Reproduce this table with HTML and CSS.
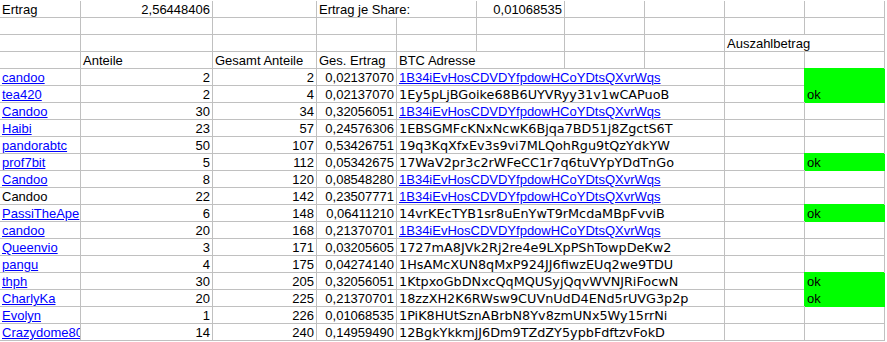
FILE: index.html
```html
<!DOCTYPE html>
<html lang="de">
<head>
<meta charset="utf-8">
<title>Ertrag</title>
<link rel="stylesheet" href="styles.css">
</head>
<body>
<div class="sheet">
  <!-- row 1 -->
  <div class="c">Ertrag</div>
  <div class="c r">2,56448406</div>
  <div class="c"></div>
  <div class="c span2">Ertrag je Share:</div>
  <div class="c r">0,01068535</div>
  <div class="c"></div><div class="c"></div><div class="c"></div><div class="c"></div>
  <!-- row 2 -->
  <div class="c"></div><div class="c"></div><div class="c"></div><div class="c"></div><div class="c"></div>
  <div class="c"></div><div class="c"></div><div class="c"></div><div class="c"></div><div class="c"></div>
  <!-- row 3 -->
  <div class="c"></div><div class="c"></div><div class="c"></div><div class="c"></div>
  <div class="c"></div><div class="c"></div><div class="c"></div><div class="c"></div>
  <div class="c span2">Auszahlbetrag</div>
  <!-- row 4 -->
  <div class="c"></div>
  <div class="c">Anteile</div>
  <div class="c">Gesamt Anteile</div>
  <div class="c">Ges. Ertrag</div>
  <div class="c span2">BTC Adresse</div>
  <div class="c"></div><div class="c"></div><div class="c"></div><div class="c"></div>

  <!-- data rows -->
  <div class="c"><a class="lnk" href="#">candoo</a></div>
  <div class="c r">2</div><div class="c r">2</div><div class="c r">0,02137070</div>
  <div class="c span4"><a class="lnk" href="#">1B34iEvHosCDVDYfpdowHCoYDtsQXvrWqs</a></div>
  <div class="c"></div><div class="c ok"></div>

  <div class="c"><a class="lnk" href="#">tea420</a></div>
  <div class="c r">2</div><div class="c r">4</div><div class="c r">0,02137070</div>
  <div class="c span4 addr">1Ey5pLjBGoike68B6UYVRyy31v1wCAPuoB</div>
  <div class="c"></div><div class="c ok">ok</div>

  <div class="c"><a class="lnk" href="#">Candoo</a></div>
  <div class="c r">30</div><div class="c r">34</div><div class="c r">0,32056051</div>
  <div class="c span4"><a class="lnk" href="#">1B34iEvHosCDVDYfpdowHCoYDtsQXvrWqs</a></div>
  <div class="c"></div><div class="c"></div>

  <div class="c"><a class="lnk" href="#">Haibi</a></div>
  <div class="c r">23</div><div class="c r">57</div><div class="c r">0,24576306</div>
  <div class="c span4 addr">1EBSGMFcKNxNcwK6Bjqa7BD51j8ZgctS6T</div>
  <div class="c"></div><div class="c"></div>

  <div class="c"><a class="lnk" href="#">pandorabtc</a></div>
  <div class="c r">50</div><div class="c r">107</div><div class="c r">0,53426751</div>
  <div class="c span4 addr">19q3KqXfxEv3s9vi7MLQohRgu9tQzYdkYW</div>
  <div class="c"></div><div class="c"></div>

  <div class="c"><a class="lnk" href="#">prof7bit</a></div>
  <div class="c r">5</div><div class="c r">112</div><div class="c r">0,05342675</div>
  <div class="c span4 addr">17WaV2pr3c2rWFeCC1r7q6tuVYpYDdTnGo</div>
  <div class="c"></div><div class="c ok">ok</div>

  <div class="c"><a class="lnk" href="#">Candoo</a></div>
  <div class="c r">8</div><div class="c r">120</div><div class="c r">0,08548280</div>
  <div class="c span4"><a class="lnk" href="#">1B34iEvHosCDVDYfpdowHCoYDtsQXvrWqs</a></div>
  <div class="c"></div><div class="c"></div>

  <div class="c">Candoo</div>
  <div class="c r">22</div><div class="c r">142</div><div class="c r">0,23507771</div>
  <div class="c span4"><a class="lnk" href="#">1B34iEvHosCDVDYfpdowHCoYDtsQXvrWqs</a></div>
  <div class="c"></div><div class="c"></div>

  <div class="c"><a class="lnk" href="#">PassiTheApe</a></div>
  <div class="c r">6</div><div class="c r">148</div><div class="c r">0,06411210</div>
  <div class="c span4 addr">14vrKEcTYB1sr8uEnYwT9rMcdaMBpFvviB</div>
  <div class="c"></div><div class="c ok">ok</div>

  <div class="c"><a class="lnk" href="#">candoo</a></div>
  <div class="c r">20</div><div class="c r">168</div><div class="c r">0,21370701</div>
  <div class="c span4"><a class="lnk" href="#">1B34iEvHosCDVDYfpdowHCoYDtsQXvrWqs</a></div>
  <div class="c"></div><div class="c"></div>

  <div class="c"><a class="lnk" href="#">Queenvio</a></div>
  <div class="c r">3</div><div class="c r">171</div><div class="c r">0,03205605</div>
  <div class="c span4 addr">1727mA8JVk2Rj2re4e9LXpPShTowpDeKw2</div>
  <div class="c"></div><div class="c"></div>

  <div class="c"><a class="lnk" href="#">pangu</a></div>
  <div class="c r">4</div><div class="c r">175</div><div class="c r">0,04274140</div>
  <div class="c span4 addr">1HsAMcXUN8qMxP924JJ6fiwzEUq2we9TDU</div>
  <div class="c"></div><div class="c"></div>

  <div class="c"><a class="lnk" href="#">thph</a></div>
  <div class="c r">30</div><div class="c r">205</div><div class="c r">0,32056051</div>
  <div class="c span4 addr">1KtpxoGbDNxcQqMQUSyjQqvWVNJRiFocwN</div>
  <div class="c"></div><div class="c ok">ok</div>

  <div class="c"><a class="lnk" href="#">CharlyKa</a></div>
  <div class="c r">20</div><div class="c r">225</div><div class="c r">0,21370701</div>
  <div class="c span4 addr">18zzXH2K6RWsw9CUVnUdD4ENd5rUVG3p2p</div>
  <div class="c"></div><div class="c ok">ok</div>

  <div class="c"><a class="lnk" href="#">Evolyn</a></div>
  <div class="c r">1</div><div class="c r">226</div><div class="c r">0,01068535</div>
  <div class="c span4 addr">1PiK8HUtSznABrbN8Yv8zmUNx5Wy15rrNi</div>
  <div class="c"></div><div class="c"></div>

  <div class="c"><a class="lnk" href="#">Crazydome80</a></div>
  <div class="c r">14</div><div class="c r">240</div><div class="c r">0,14959490</div>
  <div class="c span4 addr">12BgkYkkmjJ6Dm9TZdZY5ypbFdftzvFokD</div>
  <div class="c"></div><div class="c"></div>
</div>
</body>
</html>
```

FILE: styles.css
```css
html, body {
  margin: 0;
  padding: 0;
  background: #ffffff;
}

.sheet {
  display: grid;
  grid-template-columns: 81px 132px 104px 80px 80px 88px 80px 80px 80px 80px;
  grid-auto-rows: 17px;
  width: 885px;
  padding-top: 1px;
  font-family: "Liberation Sans", Arial, sans-serif;
  font-size: 13px;
  color: #000000;
}

.c {
  box-sizing: border-box;
  height: 17px;
  padding: 1px 2px 0 2px;
  line-height: 15px;
  white-space: nowrap;
  overflow: hidden;
  border-right: 1px solid #c0c0c0;
  border-bottom: 1px solid #c0c0c0;
}

.r {
  text-align: right;
}

.span2 {
  grid-column: span 2;
}

.span4 {
  grid-column: span 4;
}

.addr {
  font-family: "DejaVu Sans", Verdana, sans-serif;
  font-size: 12.8px;
}

.lnk {
  color: #0000ff;
  text-decoration: underline;
}

.ok {
  background: #00ff00;
  border-color: #00ff00;
  box-shadow: -1px -1px 0 0 #00ff00;
}
```
